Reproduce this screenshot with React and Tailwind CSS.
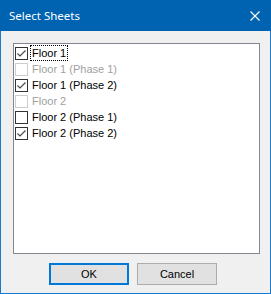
import React from "react";

const sheets = [
  { name: "Floor 1", checked: true, enabled: true, focused: true },
  { name: "Floor 1 (Phase 1)", checked: false, enabled: false },
  { name: "Floor 1 (Phase 2)", checked: true, enabled: true },
  { name: "Floor 2", checked: false, enabled: false },
  { name: "Floor 2 (Phase 1)", checked: false, enabled: true },
  { name: "Floor 2 (Phase 2)", checked: true, enabled: true },
];

function CheckBox({ checked, enabled }) {
  return (
    <div
      className={`w-[13px] h-[13px] border bg-white flex items-center justify-center ${
        enabled ? "border-[#333333]" : "border-[#cccccc]"
      }`}
    >
      {checked && (
        <svg width="11" height="11" viewBox="0 0 11 11">
          <path d="M1.5 5.5 L4 8 L9.5 2.5" fill="none" stroke="#444444" strokeWidth="1.1" />
        </svg>
      )}
    </div>
  );
}

export default function App() {
  return (
    <div
      className="w-[271px] h-[294px] flex flex-col bg-[#f0f0f0] border border-t-0 border-[#1979ca] text-[11px] text-black"
      style={{ fontFamily: '"Liberation Sans", Arial, sans-serif' }}
    >
      {/* Title bar */}
      <div className="h-[31px] -mx-px bg-[#0063b1] flex items-center justify-between pl-[9px] pr-[11px]">
        <span className="text-white text-[11.5px]" style={{ fontFamily: '"Noto Sans", sans-serif' }}>
          Select Sheets
        </span>
        <svg width="10" height="10" viewBox="0 0 10 10">
          <path d="M0.5 0.5 L9.5 9.5 M9.5 0.5 L0.5 9.5" stroke="white" strokeWidth="1.1" />
        </svg>
      </div>

      <div className="flex-1 flex flex-col pl-[12px] pr-[10px] pt-[12px]">
        {/* List */}
        <div className="h-[211px] border border-[#828790] bg-white pt-[1px] pl-[1px]">
          {sheets.map((s) => (
            <div key={s.name} className="h-[16px] flex items-center">
              <CheckBox checked={s.checked} enabled={s.enabled} />
              <span
                className={`ml-[2px] px-[1px] leading-[14px] border border-dotted ${
                  s.focused ? "border-black" : "border-transparent"
                } ${s.enabled ? "text-black" : "text-[#a0a0a0]"}`}
              >
                {s.name}
              </span>
            </div>
          ))}
        </div>

        {/* Buttons */}
        <div className="flex gap-[8px] pl-[36px] mt-[9px]">
          <button className="w-[80px] h-[22px] border-2 border-[#0078d7] bg-[#e1e1e1] text-[11px]">
            OK
          </button>
          <button className="w-[80px] h-[22px] border border-[#adadad] bg-[#e1e1e1] text-[11px]">
            Cancel
          </button>
        </div>
      </div>
    </div>
  );
}
